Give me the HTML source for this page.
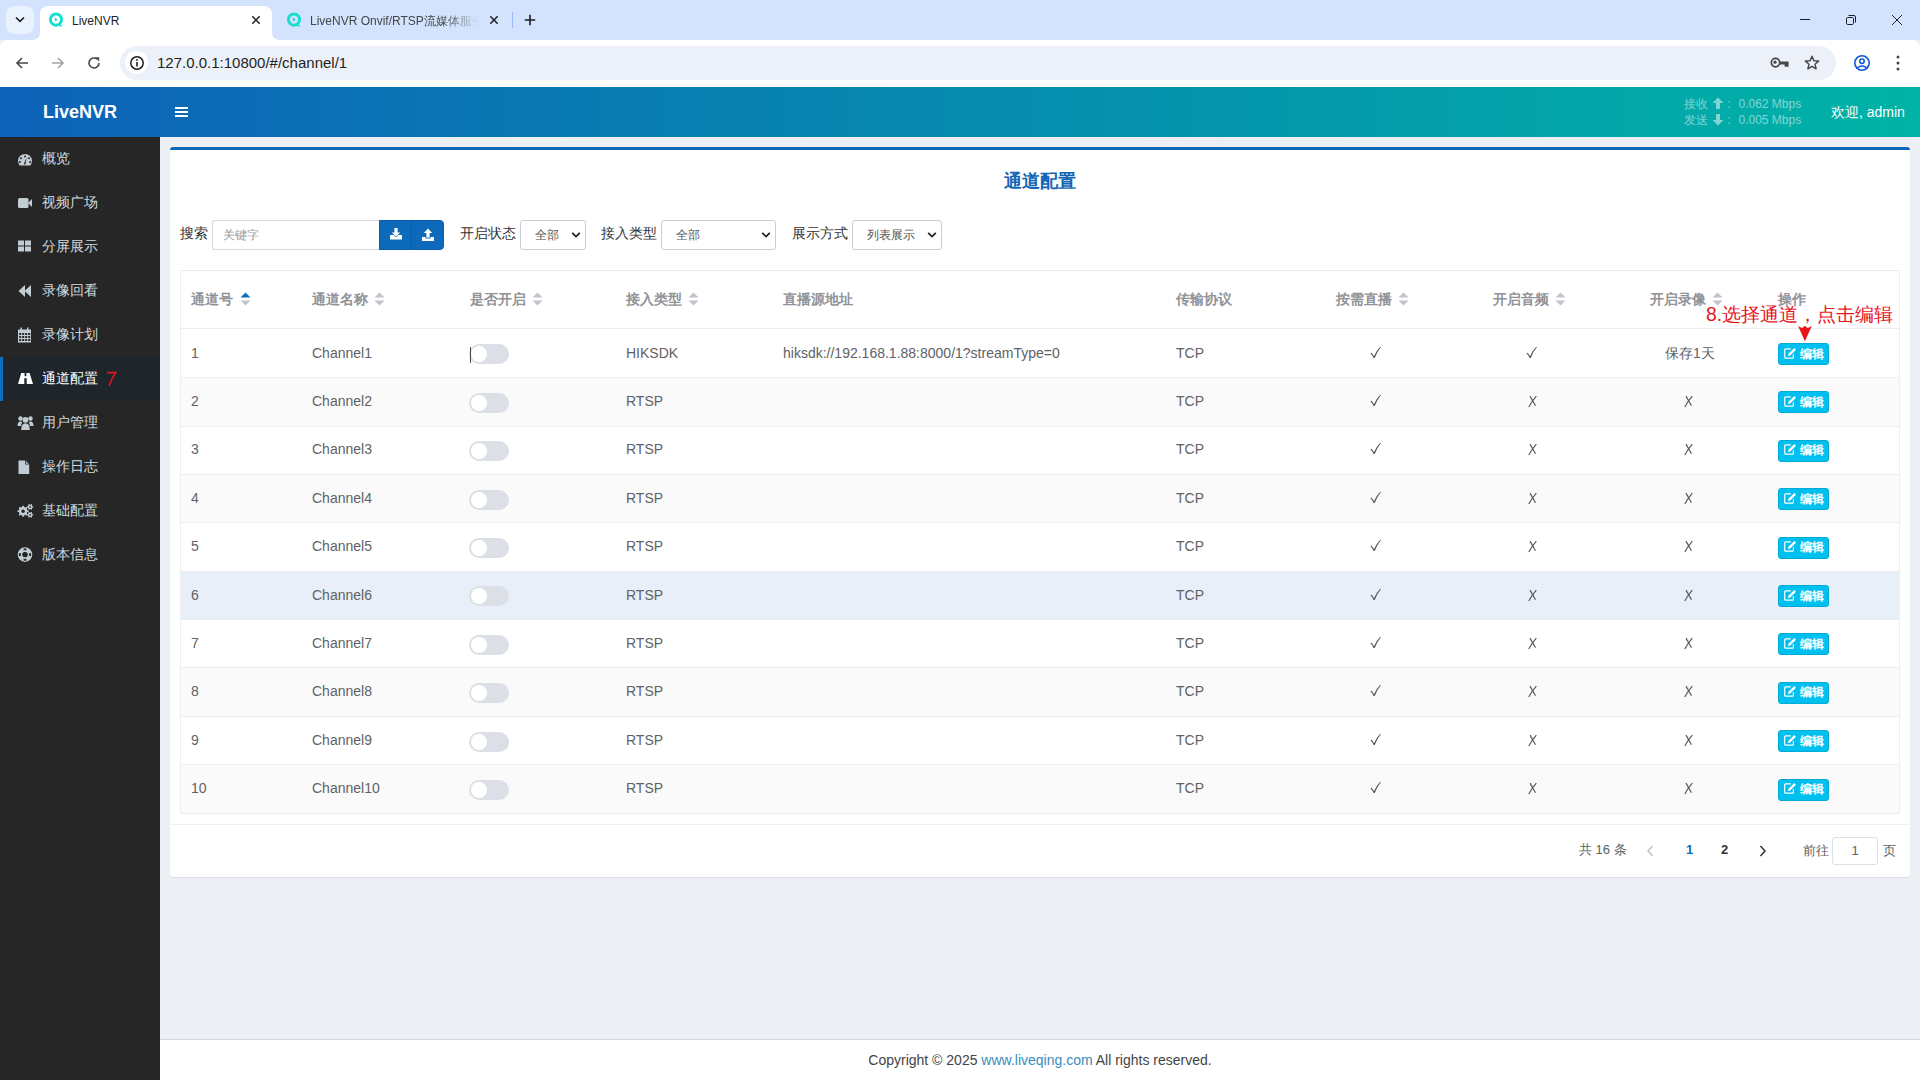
<!DOCTYPE html>
<html><head><meta charset="utf-8">
<style>
*{box-sizing:border-box;margin:0;padding:0}
html,body{width:1920px;height:1080px;overflow:hidden;background:#ecf0f5;font-family:"Liberation Sans",sans-serif;font-size:14px;color:#606266}
.abs{position:absolute}
/* browser chrome */
#tabstrip{position:absolute;left:0;top:0;width:1920px;height:40px;background:#d3e3fd}
#toolbar{position:absolute;left:0;top:40px;width:1920px;height:47px;background:#fff;border-radius:8px 8px 0 0}
#omni{position:absolute;left:120px;top:46px;width:1716px;height:34px;background:#ecf1f9;border-radius:17px}
/* app header */
#hdr{position:absolute;left:0;top:87px;width:1920px;height:50px;background:linear-gradient(90deg,#0d62b8 0%,#00b3a6 100%)}
#logo{position:absolute;left:0;top:87px;width:160px;height:50px;background:#0c65b9;color:#fff;font-weight:bold;font-size:18px;line-height:50px;text-align:center}
/* sidebar */
#side{position:absolute;left:0;top:137px;width:160px;height:943px;background:#262626}
.si{position:absolute;left:0;width:160px;height:44px;color:#cfd4d8;font-size:14px;line-height:44px}
.si .t{position:absolute;left:42px;top:0}
.si svg{position:absolute;left:18px;top:15px}
.si.act{background:#1e262b;color:#fff;border-left:3px solid #0d6ebd}
/* content */
#card{position:absolute;left:170px;top:147px;width:1740px;height:730px;background:#fff;border-top:3px solid #0d67b6;border-radius:3px;box-shadow:0 1px 1px rgba(0,0,0,.08)}
#footer{position:absolute;left:160px;top:1039px;width:1760px;height:41px;background:#fff;border-top:1px solid #d2d6de;text-align:center;color:#444;font-size:14px;line-height:40px}
#footer a{color:#3c8dbc;text-decoration:none}

.lbl{position:absolute;top:218px;line-height:30px;font-size:14px;color:#333}
.sel{position:absolute;top:220px;height:30px;border:1px solid #c8ccd3;border-radius:3px;background:#fff;font-size:12px;color:#555;line-height:28px}
.sel span{position:absolute;left:14px;top:0}
.sel svg{position:absolute;right:4px;top:10px}
.th{position:absolute;top:270px;height:58px;line-height:58px;font-size:14px;font-weight:bold;color:#909399;white-space:nowrap}
.caret{position:absolute;top:292px}
.row{position:absolute;left:181px;width:1718px;border-bottom:1px solid #ebeef5}
.td{position:absolute;font-size:14px;color:#606266;white-space:nowrap}
.sw{position:absolute;left:469px;width:40px;height:20px;border-radius:10px;background:#dcdfe6}
.sw:after{content:"";position:absolute;left:2px;top:2px;width:16px;height:16px;border-radius:50%;background:#fff}
.btn{position:absolute;left:1778px;width:51px;height:22px;background:#00c0ef;border:1px solid #00acd6;border-radius:3px}
.btn svg{position:absolute;left:5px;top:3.5px}
.btn span{position:absolute;left:21px;top:-0.5px;line-height:20px;font-size:12px;font-weight:bold;color:#fff}
</style></head><body>

<div id="tabstrip"></div>
<div class="abs" style="left:6px;top:6px;width:28px;height:28px;background:#e9f1fd;border-radius:8px"></div>
<svg class="abs" style="left:14px;top:13px" width="12" height="12" viewBox="0 0 12 12"><path d="M2 4.5 L6 8.4 L10 4.5" fill="none" stroke="#1f1f1f" stroke-width="1.6"/></svg>
<!-- active tab -->
<div class="abs" style="left:40px;top:6px;width:232px;height:34px;background:#fff;border-radius:8px 8px 0 0"></div>
<svg class="abs" style="left:32px;top:32px" width="8" height="8" viewBox="0 0 8 8"><path d="M0 8 Q8 8 8 0 L8 8 Z" fill="#fff"/></svg>
<svg class="abs" style="left:272px;top:32px" width="8" height="8" viewBox="0 0 8 8"><path d="M8 8 Q0 8 0 0 L0 8 Z" fill="#fff"/></svg>
<svg class="abs" style="left:48px;top:12px" width="16" height="16" viewBox="0 0 16 16"><circle cx="8" cy="7.6" r="5.6" fill="none" stroke="#16dfd2" stroke-width="2.9"/><path d="M11.5 11.5 L15 15 L10.5 13.8 Z" fill="#16e0c8"/><path d="M6.8 5.6 L9.8 7.6 L6.8 9.6 Z" fill="#18d8ec"/></svg>
<div class="abs" style="left:72px;top:14px;font-size:12px;line-height:14px;color:#1f1f1f">LiveNVR</div>
<svg class="abs" style="left:250px;top:14px" width="12" height="12" viewBox="0 0 12 12"><path d="M2.3 2.3 L9.7 9.7 M9.7 2.3 L2.3 9.7" stroke="#1f1f1f" stroke-width="1.5"/></svg>
<!-- tab 2 -->
<svg class="abs" style="left:286px;top:12px" width="16" height="16" viewBox="0 0 16 16"><circle cx="8" cy="7.6" r="5.6" fill="none" stroke="#16dfd2" stroke-width="2.9"/><path d="M11.5 11.5 L15 15 L10.5 13.8 Z" fill="#16e0c8"/><path d="M6.8 5.6 L9.8 7.6 L6.8 9.6 Z" fill="#18d8ec"/></svg>
<div class="abs" style="left:310px;top:14px;width:168px;height:16px;overflow:hidden;white-space:nowrap;font-size:12px;line-height:14px;color:#444746;-webkit-mask-image:linear-gradient(90deg,#000 80%,transparent 100%)">LiveNVR Onvif/RTSP流媒体服务</div>
<svg class="abs" style="left:488px;top:14px" width="12" height="12" viewBox="0 0 12 12"><path d="M2.3 2.3 L9.7 9.7 M9.7 2.3 L2.3 9.7" stroke="#1f1f1f" stroke-width="1.5"/></svg>
<div class="abs" style="left:512px;top:12px;width:1px;height:16px;background:#9bbcf1"></div>
<svg class="abs" style="left:522px;top:12px" width="16" height="16" viewBox="0 0 16 16"><path d="M8 2.8 V13.2 M2.8 8 H13.2" stroke="#1f1f1f" stroke-width="1.6"/></svg>
<!-- window controls -->
<div class="abs" style="left:1800px;top:19px;width:10px;height:1px;background:#1f1f1f"></div>
<svg class="abs" style="left:1844px;top:13px" width="14" height="14" viewBox="0 0 14 14"><rect x="2.5" y="4.5" width="7" height="7" rx="1.2" fill="none" stroke="#1f1f1f" stroke-width="1"/><path d="M4.5 2.5 H10 Q11.5 2.5 11.5 4 V9.5" fill="none" stroke="#1f1f1f" stroke-width="1"/></svg>
<svg class="abs" style="left:1890px;top:13px" width="14" height="14" viewBox="0 0 14 14"><path d="M2 2 L12 12 M12 2 L2 12" stroke="#1f1f1f" stroke-width="1"/></svg>
<!-- toolbar -->
<div id="toolbar"></div>
<svg class="abs" style="left:14px;top:55px" width="16" height="16" viewBox="0 0 16 16"><path d="M14 8 H3 M8 3 L3 8 L8 13" fill="none" stroke="#474747" stroke-width="1.6"/></svg>
<svg class="abs" style="left:50px;top:55px" width="16" height="16" viewBox="0 0 16 16"><path d="M2 8 H13 M8 3 L13 8 L8 13" fill="none" stroke="#a4a4a4" stroke-width="1.6"/></svg>
<svg class="abs" style="left:86px;top:55px" width="16" height="16" viewBox="0 0 16 16"><path d="M13 8 A5 5 0 1 1 11.3 4.2" fill="none" stroke="#474747" stroke-width="1.6"/><path d="M9 2.2 H13.2 V6.4 Z" fill="#474747"/></svg>
<div id="omni"></div>
<div class="abs" style="left:125px;top:51px;width:23px;height:23px;border-radius:50%;background:#fff"></div>
<svg class="abs" style="left:129px;top:55px" width="16" height="16" viewBox="0 0 16 16"><circle cx="8" cy="8" r="6.2" fill="none" stroke="#1f1f1f" stroke-width="1.5"/><path d="M8 7 V11.6" stroke="#1f1f1f" stroke-width="1.6"/><circle cx="8" cy="4.9" r="0.95" fill="#1f1f1f"/></svg>
<div class="abs" style="left:157px;top:54px;font-size:15px;line-height:17px;color:#1f1f1f">127.0.0.1:10800/#/channel/1</div>
<svg class="abs" style="left:1770px;top:55px" width="20" height="16" viewBox="0 0 20 16"><circle cx="5.5" cy="7.6" r="4.2" fill="none" stroke="#474747" stroke-width="1.7"/><circle cx="5" cy="7.2" r="1.6" fill="#474747"/><path d="M9.4 6.4 H18.6 V11.8 H14.6 V9.6 H9.4 Z" fill="#474747"/></svg>
<svg class="abs" style="left:1803px;top:54px" width="18" height="18" viewBox="0 0 18 18"><path d="M9 2.3 L10.9 6.7 L15.6 7.1 L12 10.2 L13.1 14.8 L9 12.4 L4.9 14.8 L6 10.2 L2.4 7.1 L7.1 6.7 Z" fill="none" stroke="#474747" stroke-width="1.5" stroke-linejoin="round"/></svg>
<svg class="abs" style="left:1852px;top:53px" width="20" height="20" viewBox="0 0 20 20"><circle cx="10" cy="10" r="7.2" fill="none" stroke="#0b57d0" stroke-width="1.6"/><circle cx="10" cy="8.2" r="2.2" fill="none" stroke="#0b57d0" stroke-width="1.5"/><path d="M5.2 15 Q10 11 14.8 15" fill="none" stroke="#0b57d0" stroke-width="1.5"/></svg>
<svg class="abs" style="left:1894px;top:54px" width="8" height="18" viewBox="0 0 8 18"><circle cx="4" cy="3" r="1.5" fill="#474747"/><circle cx="4" cy="9" r="1.5" fill="#474747"/><circle cx="4" cy="15" r="1.5" fill="#474747"/></svg>

<div id="hdr"></div>
<div class="abs" style="left:43px;top:87px;font-weight:bold;font-size:18px;line-height:50px;color:#fff">LiveNVR</div>
<div class="abs" style="left:175px;top:107px;width:13px;height:2px;background:#fff"></div>
<div class="abs" style="left:175px;top:111px;width:13px;height:2px;background:#fff"></div>
<div class="abs" style="left:175px;top:115px;width:13px;height:2px;background:#fff"></div>
<div class="abs" style="left:1684px;top:96px;font-size:12px;line-height:16px;color:rgba(255,255,255,.5);white-space:nowrap">接收<br>发送</div>
<div class="abs" style="left:1727px;top:96px;font-size:12px;line-height:16px;color:rgba(255,255,255,.5);white-space:nowrap">:<br>:</div>
<div class="abs" style="left:1738.5px;top:96px;font-size:12px;line-height:16px;color:rgba(255,255,255,.5);white-space:nowrap">0.062 Mbps<br>0.005 Mbps</div>
<svg class="abs" style="left:1712px;top:97px" width="12" height="13" viewBox="0 0 12 13"><path d="M6 0.5 L11.5 6 H8 V12 H4 V6 H0.5 Z" fill="rgba(255,255,255,.5)"/></svg>
<svg class="abs" style="left:1712px;top:113px" width="12" height="13" viewBox="0 0 12 13"><path d="M6 12.5 L11.5 7 H8 V1 H4 V7 H0.5 Z" fill="rgba(255,255,255,.5)"/></svg>
<div class="abs" style="left:1831px;top:87px;font-size:14px;line-height:50px;color:#fff">欢迎, admin</div>
<div id="side"></div>
<div class="si" style="top:137px"></div>
<svg class="abs" style="left:17px;top:153px" width="16" height="14" viewBox="0 0 16 14"><path d="M2.6 12.4 A7 7 0 1 1 13.4 12.4 Z" fill="#c2cdd3"/><circle cx="8" cy="3.6" r="1" fill="#262626"/><circle cx="4" cy="5.2" r="1" fill="#262626"/><circle cx="12" cy="5.2" r="1" fill="#262626"/><circle cx="2.8" cy="9" r="1" fill="#262626"/><circle cx="13.2" cy="9" r="1" fill="#262626"/><path d="M9.6 4.6 L7 10.6 Q7.2 12 8.4 11.4 Z" fill="#262626"/></svg>
<div class="abs st" style="left:42px;top:136px;line-height:44px;font-size:14px;color:#d0d9de">概览</div>
<div class="si" style="top:181px"></div>
<svg class="abs" style="left:17px;top:196px" width="16" height="14" viewBox="0 0 16 14"><rect x="1" y="2" width="10.5" height="10" rx="1.6" fill="#c2cdd3"/><path d="M11 7 L15 3 V11 Z" fill="#c2cdd3"/></svg>
<div class="abs st" style="left:42px;top:180px;line-height:44px;font-size:14px;color:#d0d9de">视频广场</div>
<div class="si" style="top:225px"></div>
<svg class="abs" style="left:17px;top:239px" width="16" height="14" viewBox="0 0 16 14"><rect x="1" y="1.5" width="6" height="5" fill="#c2cdd3"/><rect x="8" y="1.5" width="6" height="5" fill="#c2cdd3"/><rect x="1" y="7.5" width="6" height="5" fill="#c2cdd3"/><rect x="8" y="7.5" width="6" height="5" fill="#c2cdd3"/></svg>
<div class="abs st" style="left:42px;top:224px;line-height:44px;font-size:14px;color:#d0d9de">分屏展示</div>
<div class="si" style="top:269px"></div>
<svg class="abs" style="left:17px;top:284px" width="16" height="14" viewBox="0 0 16 14"><path d="M1.5 7 L8 1 V13 Z" fill="#c2cdd3"/><path d="M7.5 7 L14 1 V13 Z" fill="#c2cdd3"/></svg>
<div class="abs st" style="left:42px;top:268px;line-height:44px;font-size:14px;color:#d0d9de">录像回看</div>
<div class="si" style="top:313px"></div>
<svg class="abs" style="left:17px;top:327px" width="16" height="16" viewBox="0 0 16 16"><rect x="1" y="2.5" width="13" height="13" fill="#c2cdd3"/><g fill="#262626"><rect x="2.2" y="6" width="2" height="2"/><rect x="5.2" y="6" width="2" height="2"/><rect x="8.2" y="6" width="2" height="2"/><rect x="11.2" y="6" width="2" height="2"/><rect x="2.2" y="9" width="2" height="2"/><rect x="5.2" y="9" width="2" height="2"/><rect x="8.2" y="9" width="2" height="2"/><rect x="11.2" y="9" width="2" height="2"/><rect x="2.2" y="12" width="2" height="2"/><rect x="5.2" y="12" width="2" height="2"/><rect x="8.2" y="12" width="2" height="2"/><rect x="11.2" y="12" width="2" height="2"/></g><rect x="3.5" y="0.5" width="1.5" height="3" fill="#c2cdd3"/><rect x="10" y="0.5" width="1.5" height="3" fill="#c2cdd3"/></svg>
<div class="abs st" style="left:42px;top:312px;line-height:44px;font-size:14px;color:#d0d9de">录像计划</div>
<div class="si act" style="top:357px"></div>
<svg class="abs" style="left:17px;top:372px" width="17" height="14" viewBox="0 0 17 14"><path d="M4.2 1 H12.6 L16 12 H1 Z" fill="#fff"/><rect x="7.6" y="1" width="1.8" height="3.2" fill="#1e262b"/><rect x="7.3" y="6.2" width="2.4" height="5.8" fill="#1e262b"/></svg>
<div class="abs st" style="left:42px;top:356px;line-height:44px;font-size:14px;color:#fff">通道配置</div>
<div class="si" style="top:401px"></div>
<svg class="abs" style="left:17px;top:415px" width="18" height="16" viewBox="0 0 18 16"><circle cx="3.5" cy="3.5" r="2.2" fill="#c2cdd3"/><circle cx="13.5" cy="3.5" r="2.2" fill="#c2cdd3"/><circle cx="8.5" cy="4.8" r="2.9" fill="#c2cdd3"/><path d="M0.5 11 Q0.5 6.5 3.5 6.5 Q5 6.5 5.3 7.3 Q4 9 4.2 11 Z" fill="#c2cdd3"/><path d="M16.5 11 Q16.5 6.5 13.5 6.5 Q12 6.5 11.7 7.3 Q13 9 12.8 11 Z" fill="#c2cdd3"/><path d="M4.2 15 Q4.2 8.3 8.5 8.3 Q12.8 8.3 12.8 15 Z" fill="#c2cdd3"/></svg>
<div class="abs st" style="left:42px;top:400px;line-height:44px;font-size:14px;color:#d0d9de">用户管理</div>
<div class="si" style="top:445px"></div>
<svg class="abs" style="left:17px;top:460px" width="16" height="16" viewBox="0 0 16 16"><path d="M1.5 0.5 H8.2 L12.2 4.5 V14 H1.5 Z" fill="#c2cdd3"/><path d="M8.2 0.5 V4.5 H12.2" fill="#262626"/><path d="M9 1.3 L11.4 3.7 H9 Z" fill="#c2cdd3"/></svg>
<div class="abs st" style="left:42px;top:444px;line-height:44px;font-size:14px;color:#d0d9de">操作日志</div>
<div class="si" style="top:489px"></div>
<svg class="abs" style="left:17px;top:503px" width="17" height="17" viewBox="0 0 17 17"><circle cx="6.1" cy="8.2" r="4.2" fill="#c2cdd3"/><path d="M10.20 7.30 L11.65 7.48 L11.65 8.92 L10.20 9.10 L9.64 10.46 L10.54 11.61 L9.51 12.64 L8.36 11.74 L7.00 12.30 L6.82 13.75 L5.38 13.75 L5.20 12.30 L3.84 11.74 L2.69 12.64 L1.66 11.61 L2.56 10.46 L2.00 9.10 L0.55 8.92 L0.55 7.48 L2.00 7.30 L2.56 5.94 L1.66 4.79 L2.69 3.76 L3.84 4.66 L5.20 4.10 L5.38 2.65 L6.82 2.65 L7.00 4.10 L8.36 4.66 L9.51 3.76 L10.54 4.79 L9.64 5.94 Z" fill="#c2cdd3"/><circle cx="6.1" cy="8.2" r="1.7" fill="#262626"/><circle cx="13.2" cy="3.9" r="2.2" fill="#c2cdd3"/><path d="M15.31 3.28 L16.25 3.37 L16.25 4.43 L15.31 4.52 L14.80 5.41 L15.19 6.28 L14.27 6.81 L13.71 6.04 L12.69 6.04 L12.13 6.81 L11.21 6.28 L11.60 5.41 L11.09 4.52 L10.15 4.43 L10.15 3.37 L11.09 3.28 L11.60 2.39 L11.21 1.52 L12.13 0.99 L12.69 1.76 L13.71 1.76 L14.27 0.99 L15.19 1.52 L14.80 2.39 Z" fill="#c2cdd3"/><circle cx="13.2" cy="3.9" r="0.9" fill="#262626"/><circle cx="13.2" cy="11.8" r="2.2" fill="#c2cdd3"/><path d="M15.31 11.18 L16.25 11.27 L16.25 12.33 L15.31 12.42 L14.80 13.31 L15.19 14.18 L14.27 14.71 L13.71 13.94 L12.69 13.94 L12.13 14.71 L11.21 14.18 L11.60 13.31 L11.09 12.42 L10.15 12.33 L10.15 11.27 L11.09 11.18 L11.60 10.29 L11.21 9.42 L12.13 8.89 L12.69 9.66 L13.71 9.66 L14.27 8.89 L15.19 9.42 L14.80 10.29 Z" fill="#c2cdd3"/><circle cx="13.2" cy="11.8" r="0.9" fill="#262626"/></svg>
<div class="abs st" style="left:42px;top:488px;line-height:44px;font-size:14px;color:#d0d9de">基础配置</div>
<div class="si" style="top:533px"></div>
<svg class="abs" style="left:17px;top:547px" width="16" height="16" viewBox="0 0 16 16"><circle cx="8" cy="7.6" r="7.3" fill="#c2cdd3"/><circle cx="8" cy="7.6" r="2.9" fill="#262626"/><g fill="#262626"><rect x="6.6" y="1.5" width="2.8" height="2.2"/><rect x="6.6" y="11.5" width="2.8" height="2.2"/><rect x="1.9" y="6.2" width="2.2" height="2.8"/><rect x="11.9" y="6.2" width="2.2" height="2.8"/></g><circle cx="8" cy="7.6" r="3.6" fill="none" stroke="#c2cdd3" stroke-width="1.3"/></svg>
<div class="abs st" style="left:42px;top:532px;line-height:44px;font-size:14px;color:#d0d9de">版本信息</div>
<svg class="abs" style="left:105px;top:370px" width="14" height="18" viewBox="0 0 14 18"><path d="M2 2.6 H10.6 Q7 8 4 16" fill="none" stroke="#e8141c" stroke-width="1.6"/></svg>
<div id="card"></div>
<div class="abs" style="left:1004px;top:169px;font-size:18px;line-height:24px;font-weight:bold;color:#1066b6">通道配置</div>
<div class="lbl" style="left:180px">搜索</div>
<div class="abs" style="left:212px;top:220px;width:168px;height:30px;border:1px solid #d2d6de;border-right:none;border-radius:3px 0 0 3px;background:#fff"></div>
<div class="abs" style="left:223px;top:220px;line-height:30px;font-size:12px;color:#999">关键字</div>
<div class="abs" style="left:379px;top:220px;width:65px;height:30px;background:#0d6abb;border:1px solid #0a5fa9;border-radius:0 4px 4px 0"></div>
<div class="abs" style="left:411px;top:220px;width:1px;height:30px;background:#0a5ea8"></div>
<svg class="abs" style="left:389px;top:227px" width="14" height="14" viewBox="0 0 14 14"><path d="M5.4 1 H8.6 V5.5 H11.2 L7 9.8 L2.8 5.5 H5.4 Z" fill="#fff"/><path d="M1 8 H4.6 L7 10.4 L9.4 8 H13 V12.4 H1 Z" fill="#fff"/></svg>
<svg class="abs" style="left:421px;top:228px" width="14" height="14" viewBox="0 0 14 14"><path d="M7 0.6 L11.2 4.9 H8.6 V9.4 H5.4 V4.9 H2.8 Z" fill="#fff"/><path d="M1 9 H4.6 V10.4 H9.4 V9 H13 V13 H1 Z" fill="#fff"/></svg>
<div class="lbl" style="left:460px">开启状态</div>
<div class="sel" style="left:520px;width:66px"><span>全部</span><svg width="10" height="8" viewBox="0 0 10 8"><path d="M1.2 1.8 L5 5.6 L8.8 1.8" fill="none" stroke="#222" stroke-width="1.8"/></svg></div>
<div class="lbl" style="left:601px">接入类型</div>
<div class="sel" style="left:661px;width:115px"><span>全部</span><svg width="10" height="8" viewBox="0 0 10 8"><path d="M1.2 1.8 L5 5.6 L8.8 1.8" fill="none" stroke="#222" stroke-width="1.8"/></svg></div>
<div class="lbl" style="left:792px">展示方式</div>
<div class="sel" style="left:852px;width:90px"><span>列表展示</span><svg width="10" height="8" viewBox="0 0 10 8"><path d="M1.2 1.8 L5 5.6 L8.8 1.8" fill="none" stroke="#222" stroke-width="1.8"/></svg></div>
<div class="abs" style="left:180px;top:270px;width:1720px;height:544px;border:1px solid #ebeef5;border-top-color:#ebebeb;background:#fff"></div>
<div class="abs" style="left:181px;top:328px;width:1718px;height:1px;background:#ebeef5"></div>
<div class="th" style="left:191px">通道号</div>
<svg class="caret" style="left:240px" width="11" height="14" viewBox="0 0 11 14"><path d="M0.5 5.5 L5.5 0.5 L10.5 5.5 Z" fill="#0d6ebd"/><path d="M0.5 8.5 L5.5 13.5 L10.5 8.5 Z" fill="#c0c4cc"/></svg>
<div class="th" style="left:312px">通道名称</div>
<svg class="caret" style="left:374px" width="11" height="14" viewBox="0 0 11 14"><path d="M0.5 5.5 L5.5 0.5 L10.5 5.5 Z" fill="#c0c4cc"/><path d="M0.5 8.5 L5.5 13.5 L10.5 8.5 Z" fill="#c0c4cc"/></svg>
<div class="th" style="left:470px">是否开启</div>
<svg class="caret" style="left:532px" width="11" height="14" viewBox="0 0 11 14"><path d="M0.5 5.5 L5.5 0.5 L10.5 5.5 Z" fill="#c0c4cc"/><path d="M0.5 8.5 L5.5 13.5 L10.5 8.5 Z" fill="#c0c4cc"/></svg>
<div class="th" style="left:626px">接入类型</div>
<svg class="caret" style="left:688px" width="11" height="14" viewBox="0 0 11 14"><path d="M0.5 5.5 L5.5 0.5 L10.5 5.5 Z" fill="#c0c4cc"/><path d="M0.5 8.5 L5.5 13.5 L10.5 8.5 Z" fill="#c0c4cc"/></svg>
<div class="th" style="left:783px">直播源地址</div>
<div class="th" style="left:1176px">传输协议</div>
<div class="th" style="left:1336px">按需直播</div>
<svg class="caret" style="left:1398px" width="11" height="14" viewBox="0 0 11 14"><path d="M0.5 5.5 L5.5 0.5 L10.5 5.5 Z" fill="#c0c4cc"/><path d="M0.5 8.5 L5.5 13.5 L10.5 8.5 Z" fill="#c0c4cc"/></svg>
<div class="th" style="left:1493px">开启音频</div>
<svg class="caret" style="left:1555px" width="11" height="14" viewBox="0 0 11 14"><path d="M0.5 5.5 L5.5 0.5 L10.5 5.5 Z" fill="#c0c4cc"/><path d="M0.5 8.5 L5.5 13.5 L10.5 8.5 Z" fill="#c0c4cc"/></svg>
<div class="th" style="left:1650px">开启录像</div>
<svg class="caret" style="left:1712px" width="11" height="14" viewBox="0 0 11 14"><path d="M0.5 5.5 L5.5 0.5 L10.5 5.5 Z" fill="#c0c4cc"/><path d="M0.5 8.5 L5.5 13.5 L10.5 8.5 Z" fill="#c0c4cc"/></svg>
<div class="th" style="left:1778px">操作</div>
<div class="row" style="top:330px;height:48px;background:#fff"></div>
<div class="td" style="left:191px;top:329.60px;line-height:47.40px">1</div>
<div class="td" style="left:312px;top:329.60px;line-height:47.40px">Channel1</div>
<div class="sw" style="top:344.30px"></div>
<div class="td" style="left:626px;top:329.60px;line-height:47.40px">HIKSDK</div>
<div class="td" style="left:783px;top:329.60px;line-height:47.40px">hiksdk://192.168.1.88:8000/1?streamType=0</div>
<div class="td" style="left:1176px;top:329.60px;line-height:47.40px">TCP</div>
<svg class="abs" style="left:1368px;top:344.60px" width="16" height="16" viewBox="0 0 16 16"><path d="M2.4 8.3 L3.6 7.7 Q5 9.4 6 11.3 Q8.6 5.2 12.3 1.7 L12.9 2.3 Q9.6 6 6.7 12.9 L5.6 12.9 Q4.3 9.8 2.4 8.3 Z" fill="#555"/></svg>
<svg class="abs" style="left:1524px;top:344.60px" width="16" height="16" viewBox="0 0 16 16"><path d="M2.4 8.3 L3.6 7.7 Q5 9.4 6 11.3 Q8.6 5.2 12.3 1.7 L12.9 2.3 Q9.6 6 6.7 12.9 L5.6 12.9 Q4.3 9.8 2.4 8.3 Z" fill="#555"/></svg>
<div class="td" style="left:1665px;top:329.60px;line-height:47.40px">保存1天</div>
<div class="btn" style="top:343.00px"><svg width="13" height="12" viewBox="0 0 13 12"><path d="M6.8 0.8 H1.7 Q0.7 0.8 0.7 1.8 V9.2 Q0.7 10.2 1.7 10.2 H8.4 Q9.4 10.2 9.4 9.2 V6.2" fill="none" stroke="#fff" stroke-width="1.2"/><path d="M10.3 0 L12 1.7 L6.2 7.5 L3.9 8.1 L4.5 5.8 Z" fill="#fff"/></svg><span>编辑</span></div>
<div class="row" style="top:378px;height:49px;background:#fafafa"></div>
<div class="td" style="left:191px;top:378.00px;line-height:47.40px">2</div>
<div class="td" style="left:312px;top:378.00px;line-height:47.40px">Channel2</div>
<div class="sw" style="top:392.70px"></div>
<div class="td" style="left:626px;top:378.00px;line-height:47.40px">RTSP</div>
<div class="td" style="left:1176px;top:378.00px;line-height:47.40px">TCP</div>
<svg class="abs" style="left:1368px;top:393.00px" width="16" height="16" viewBox="0 0 16 16"><path d="M2.4 8.3 L3.6 7.7 Q5 9.4 6 11.3 Q8.6 5.2 12.3 1.7 L12.9 2.3 Q9.6 6 6.7 12.9 L5.6 12.9 Q4.3 9.8 2.4 8.3 Z" fill="#555"/></svg>
<svg class="abs" style="left:1526px;top:393.00px" width="16" height="16" viewBox="0 0 16 16"><path d="M4 3.1 Q6.5 7.5 9.5 12.7 M10.3 3.1 Q6 8 2.8 14" fill="none" stroke="#555" stroke-width="1.15"/></svg>
<svg class="abs" style="left:1682px;top:393.00px" width="16" height="16" viewBox="0 0 16 16"><path d="M4 3.1 Q6.5 7.5 9.5 12.7 M10.3 3.1 Q6 8 2.8 14" fill="none" stroke="#555" stroke-width="1.15"/></svg>
<div class="btn" style="top:391.40px"><svg width="13" height="12" viewBox="0 0 13 12"><path d="M6.8 0.8 H1.7 Q0.7 0.8 0.7 1.8 V9.2 Q0.7 10.2 1.7 10.2 H8.4 Q9.4 10.2 9.4 9.2 V6.2" fill="none" stroke="#fff" stroke-width="1.2"/><path d="M10.3 0 L12 1.7 L6.2 7.5 L3.9 8.1 L4.5 5.8 Z" fill="#fff"/></svg><span>编辑</span></div>
<div class="row" style="top:427px;height:48px;background:#fff"></div>
<div class="td" style="left:191px;top:426.40px;line-height:47.40px">3</div>
<div class="td" style="left:312px;top:426.40px;line-height:47.40px">Channel3</div>
<div class="sw" style="top:441.10px"></div>
<div class="td" style="left:626px;top:426.40px;line-height:47.40px">RTSP</div>
<div class="td" style="left:1176px;top:426.40px;line-height:47.40px">TCP</div>
<svg class="abs" style="left:1368px;top:441.40px" width="16" height="16" viewBox="0 0 16 16"><path d="M2.4 8.3 L3.6 7.7 Q5 9.4 6 11.3 Q8.6 5.2 12.3 1.7 L12.9 2.3 Q9.6 6 6.7 12.9 L5.6 12.9 Q4.3 9.8 2.4 8.3 Z" fill="#555"/></svg>
<svg class="abs" style="left:1526px;top:441.40px" width="16" height="16" viewBox="0 0 16 16"><path d="M4 3.1 Q6.5 7.5 9.5 12.7 M10.3 3.1 Q6 8 2.8 14" fill="none" stroke="#555" stroke-width="1.15"/></svg>
<svg class="abs" style="left:1682px;top:441.40px" width="16" height="16" viewBox="0 0 16 16"><path d="M4 3.1 Q6.5 7.5 9.5 12.7 M10.3 3.1 Q6 8 2.8 14" fill="none" stroke="#555" stroke-width="1.15"/></svg>
<div class="btn" style="top:439.80px"><svg width="13" height="12" viewBox="0 0 13 12"><path d="M6.8 0.8 H1.7 Q0.7 0.8 0.7 1.8 V9.2 Q0.7 10.2 1.7 10.2 H8.4 Q9.4 10.2 9.4 9.2 V6.2" fill="none" stroke="#fff" stroke-width="1.2"/><path d="M10.3 0 L12 1.7 L6.2 7.5 L3.9 8.1 L4.5 5.8 Z" fill="#fff"/></svg><span>编辑</span></div>
<div class="row" style="top:475px;height:48px;background:#fafafa"></div>
<div class="td" style="left:191px;top:474.80px;line-height:47.40px">4</div>
<div class="td" style="left:312px;top:474.80px;line-height:47.40px">Channel4</div>
<div class="sw" style="top:489.50px"></div>
<div class="td" style="left:626px;top:474.80px;line-height:47.40px">RTSP</div>
<div class="td" style="left:1176px;top:474.80px;line-height:47.40px">TCP</div>
<svg class="abs" style="left:1368px;top:489.80px" width="16" height="16" viewBox="0 0 16 16"><path d="M2.4 8.3 L3.6 7.7 Q5 9.4 6 11.3 Q8.6 5.2 12.3 1.7 L12.9 2.3 Q9.6 6 6.7 12.9 L5.6 12.9 Q4.3 9.8 2.4 8.3 Z" fill="#555"/></svg>
<svg class="abs" style="left:1526px;top:489.80px" width="16" height="16" viewBox="0 0 16 16"><path d="M4 3.1 Q6.5 7.5 9.5 12.7 M10.3 3.1 Q6 8 2.8 14" fill="none" stroke="#555" stroke-width="1.15"/></svg>
<svg class="abs" style="left:1682px;top:489.80px" width="16" height="16" viewBox="0 0 16 16"><path d="M4 3.1 Q6.5 7.5 9.5 12.7 M10.3 3.1 Q6 8 2.8 14" fill="none" stroke="#555" stroke-width="1.15"/></svg>
<div class="btn" style="top:488.20px"><svg width="13" height="12" viewBox="0 0 13 12"><path d="M6.8 0.8 H1.7 Q0.7 0.8 0.7 1.8 V9.2 Q0.7 10.2 1.7 10.2 H8.4 Q9.4 10.2 9.4 9.2 V6.2" fill="none" stroke="#fff" stroke-width="1.2"/><path d="M10.3 0 L12 1.7 L6.2 7.5 L3.9 8.1 L4.5 5.8 Z" fill="#fff"/></svg><span>编辑</span></div>
<div class="row" style="top:523px;height:49px;background:#fff"></div>
<div class="td" style="left:191px;top:523.20px;line-height:47.40px">5</div>
<div class="td" style="left:312px;top:523.20px;line-height:47.40px">Channel5</div>
<div class="sw" style="top:537.90px"></div>
<div class="td" style="left:626px;top:523.20px;line-height:47.40px">RTSP</div>
<div class="td" style="left:1176px;top:523.20px;line-height:47.40px">TCP</div>
<svg class="abs" style="left:1368px;top:538.20px" width="16" height="16" viewBox="0 0 16 16"><path d="M2.4 8.3 L3.6 7.7 Q5 9.4 6 11.3 Q8.6 5.2 12.3 1.7 L12.9 2.3 Q9.6 6 6.7 12.9 L5.6 12.9 Q4.3 9.8 2.4 8.3 Z" fill="#555"/></svg>
<svg class="abs" style="left:1526px;top:538.20px" width="16" height="16" viewBox="0 0 16 16"><path d="M4 3.1 Q6.5 7.5 9.5 12.7 M10.3 3.1 Q6 8 2.8 14" fill="none" stroke="#555" stroke-width="1.15"/></svg>
<svg class="abs" style="left:1682px;top:538.20px" width="16" height="16" viewBox="0 0 16 16"><path d="M4 3.1 Q6.5 7.5 9.5 12.7 M10.3 3.1 Q6 8 2.8 14" fill="none" stroke="#555" stroke-width="1.15"/></svg>
<div class="btn" style="top:536.60px"><svg width="13" height="12" viewBox="0 0 13 12"><path d="M6.8 0.8 H1.7 Q0.7 0.8 0.7 1.8 V9.2 Q0.7 10.2 1.7 10.2 H8.4 Q9.4 10.2 9.4 9.2 V6.2" fill="none" stroke="#fff" stroke-width="1.2"/><path d="M10.3 0 L12 1.7 L6.2 7.5 L3.9 8.1 L4.5 5.8 Z" fill="#fff"/></svg><span>编辑</span></div>
<div class="row" style="top:572px;height:48px;background:#e8eff8"></div>
<div class="td" style="left:191px;top:571.60px;line-height:47.40px">6</div>
<div class="td" style="left:312px;top:571.60px;line-height:47.40px">Channel6</div>
<div class="sw" style="top:586.30px"></div>
<div class="td" style="left:626px;top:571.60px;line-height:47.40px">RTSP</div>
<div class="td" style="left:1176px;top:571.60px;line-height:47.40px">TCP</div>
<svg class="abs" style="left:1368px;top:586.60px" width="16" height="16" viewBox="0 0 16 16"><path d="M2.4 8.3 L3.6 7.7 Q5 9.4 6 11.3 Q8.6 5.2 12.3 1.7 L12.9 2.3 Q9.6 6 6.7 12.9 L5.6 12.9 Q4.3 9.8 2.4 8.3 Z" fill="#555"/></svg>
<svg class="abs" style="left:1526px;top:586.60px" width="16" height="16" viewBox="0 0 16 16"><path d="M4 3.1 Q6.5 7.5 9.5 12.7 M10.3 3.1 Q6 8 2.8 14" fill="none" stroke="#555" stroke-width="1.15"/></svg>
<svg class="abs" style="left:1682px;top:586.60px" width="16" height="16" viewBox="0 0 16 16"><path d="M4 3.1 Q6.5 7.5 9.5 12.7 M10.3 3.1 Q6 8 2.8 14" fill="none" stroke="#555" stroke-width="1.15"/></svg>
<div class="btn" style="top:585.00px"><svg width="13" height="12" viewBox="0 0 13 12"><path d="M6.8 0.8 H1.7 Q0.7 0.8 0.7 1.8 V9.2 Q0.7 10.2 1.7 10.2 H8.4 Q9.4 10.2 9.4 9.2 V6.2" fill="none" stroke="#fff" stroke-width="1.2"/><path d="M10.3 0 L12 1.7 L6.2 7.5 L3.9 8.1 L4.5 5.8 Z" fill="#fff"/></svg><span>编辑</span></div>
<div class="row" style="top:620px;height:48px;background:#fff"></div>
<div class="td" style="left:191px;top:620.00px;line-height:47.40px">7</div>
<div class="td" style="left:312px;top:620.00px;line-height:47.40px">Channel7</div>
<div class="sw" style="top:634.70px"></div>
<div class="td" style="left:626px;top:620.00px;line-height:47.40px">RTSP</div>
<div class="td" style="left:1176px;top:620.00px;line-height:47.40px">TCP</div>
<svg class="abs" style="left:1368px;top:635.00px" width="16" height="16" viewBox="0 0 16 16"><path d="M2.4 8.3 L3.6 7.7 Q5 9.4 6 11.3 Q8.6 5.2 12.3 1.7 L12.9 2.3 Q9.6 6 6.7 12.9 L5.6 12.9 Q4.3 9.8 2.4 8.3 Z" fill="#555"/></svg>
<svg class="abs" style="left:1526px;top:635.00px" width="16" height="16" viewBox="0 0 16 16"><path d="M4 3.1 Q6.5 7.5 9.5 12.7 M10.3 3.1 Q6 8 2.8 14" fill="none" stroke="#555" stroke-width="1.15"/></svg>
<svg class="abs" style="left:1682px;top:635.00px" width="16" height="16" viewBox="0 0 16 16"><path d="M4 3.1 Q6.5 7.5 9.5 12.7 M10.3 3.1 Q6 8 2.8 14" fill="none" stroke="#555" stroke-width="1.15"/></svg>
<div class="btn" style="top:633.40px"><svg width="13" height="12" viewBox="0 0 13 12"><path d="M6.8 0.8 H1.7 Q0.7 0.8 0.7 1.8 V9.2 Q0.7 10.2 1.7 10.2 H8.4 Q9.4 10.2 9.4 9.2 V6.2" fill="none" stroke="#fff" stroke-width="1.2"/><path d="M10.3 0 L12 1.7 L6.2 7.5 L3.9 8.1 L4.5 5.8 Z" fill="#fff"/></svg><span>编辑</span></div>
<div class="row" style="top:668px;height:49px;background:#fafafa"></div>
<div class="td" style="left:191px;top:668.40px;line-height:47.40px">8</div>
<div class="td" style="left:312px;top:668.40px;line-height:47.40px">Channel8</div>
<div class="sw" style="top:683.10px"></div>
<div class="td" style="left:626px;top:668.40px;line-height:47.40px">RTSP</div>
<div class="td" style="left:1176px;top:668.40px;line-height:47.40px">TCP</div>
<svg class="abs" style="left:1368px;top:683.40px" width="16" height="16" viewBox="0 0 16 16"><path d="M2.4 8.3 L3.6 7.7 Q5 9.4 6 11.3 Q8.6 5.2 12.3 1.7 L12.9 2.3 Q9.6 6 6.7 12.9 L5.6 12.9 Q4.3 9.8 2.4 8.3 Z" fill="#555"/></svg>
<svg class="abs" style="left:1526px;top:683.40px" width="16" height="16" viewBox="0 0 16 16"><path d="M4 3.1 Q6.5 7.5 9.5 12.7 M10.3 3.1 Q6 8 2.8 14" fill="none" stroke="#555" stroke-width="1.15"/></svg>
<svg class="abs" style="left:1682px;top:683.40px" width="16" height="16" viewBox="0 0 16 16"><path d="M4 3.1 Q6.5 7.5 9.5 12.7 M10.3 3.1 Q6 8 2.8 14" fill="none" stroke="#555" stroke-width="1.15"/></svg>
<div class="btn" style="top:681.80px"><svg width="13" height="12" viewBox="0 0 13 12"><path d="M6.8 0.8 H1.7 Q0.7 0.8 0.7 1.8 V9.2 Q0.7 10.2 1.7 10.2 H8.4 Q9.4 10.2 9.4 9.2 V6.2" fill="none" stroke="#fff" stroke-width="1.2"/><path d="M10.3 0 L12 1.7 L6.2 7.5 L3.9 8.1 L4.5 5.8 Z" fill="#fff"/></svg><span>编辑</span></div>
<div class="row" style="top:717px;height:48px;background:#fff"></div>
<div class="td" style="left:191px;top:716.80px;line-height:47.40px">9</div>
<div class="td" style="left:312px;top:716.80px;line-height:47.40px">Channel9</div>
<div class="sw" style="top:731.50px"></div>
<div class="td" style="left:626px;top:716.80px;line-height:47.40px">RTSP</div>
<div class="td" style="left:1176px;top:716.80px;line-height:47.40px">TCP</div>
<svg class="abs" style="left:1368px;top:731.80px" width="16" height="16" viewBox="0 0 16 16"><path d="M2.4 8.3 L3.6 7.7 Q5 9.4 6 11.3 Q8.6 5.2 12.3 1.7 L12.9 2.3 Q9.6 6 6.7 12.9 L5.6 12.9 Q4.3 9.8 2.4 8.3 Z" fill="#555"/></svg>
<svg class="abs" style="left:1526px;top:731.80px" width="16" height="16" viewBox="0 0 16 16"><path d="M4 3.1 Q6.5 7.5 9.5 12.7 M10.3 3.1 Q6 8 2.8 14" fill="none" stroke="#555" stroke-width="1.15"/></svg>
<svg class="abs" style="left:1682px;top:731.80px" width="16" height="16" viewBox="0 0 16 16"><path d="M4 3.1 Q6.5 7.5 9.5 12.7 M10.3 3.1 Q6 8 2.8 14" fill="none" stroke="#555" stroke-width="1.15"/></svg>
<div class="btn" style="top:730.20px"><svg width="13" height="12" viewBox="0 0 13 12"><path d="M6.8 0.8 H1.7 Q0.7 0.8 0.7 1.8 V9.2 Q0.7 10.2 1.7 10.2 H8.4 Q9.4 10.2 9.4 9.2 V6.2" fill="none" stroke="#fff" stroke-width="1.2"/><path d="M10.3 0 L12 1.7 L6.2 7.5 L3.9 8.1 L4.5 5.8 Z" fill="#fff"/></svg><span>编辑</span></div>
<div class="row" style="top:765px;height:49px;background:#fafafa"></div>
<div class="td" style="left:191px;top:765.20px;line-height:47.40px">10</div>
<div class="td" style="left:312px;top:765.20px;line-height:47.40px">Channel10</div>
<div class="sw" style="top:779.90px"></div>
<div class="td" style="left:626px;top:765.20px;line-height:47.40px">RTSP</div>
<div class="td" style="left:1176px;top:765.20px;line-height:47.40px">TCP</div>
<svg class="abs" style="left:1368px;top:780.20px" width="16" height="16" viewBox="0 0 16 16"><path d="M2.4 8.3 L3.6 7.7 Q5 9.4 6 11.3 Q8.6 5.2 12.3 1.7 L12.9 2.3 Q9.6 6 6.7 12.9 L5.6 12.9 Q4.3 9.8 2.4 8.3 Z" fill="#555"/></svg>
<svg class="abs" style="left:1526px;top:780.20px" width="16" height="16" viewBox="0 0 16 16"><path d="M4 3.1 Q6.5 7.5 9.5 12.7 M10.3 3.1 Q6 8 2.8 14" fill="none" stroke="#555" stroke-width="1.15"/></svg>
<svg class="abs" style="left:1682px;top:780.20px" width="16" height="16" viewBox="0 0 16 16"><path d="M4 3.1 Q6.5 7.5 9.5 12.7 M10.3 3.1 Q6 8 2.8 14" fill="none" stroke="#555" stroke-width="1.15"/></svg>
<div class="btn" style="top:778.60px"><svg width="13" height="12" viewBox="0 0 13 12"><path d="M6.8 0.8 H1.7 Q0.7 0.8 0.7 1.8 V9.2 Q0.7 10.2 1.7 10.2 H8.4 Q9.4 10.2 9.4 9.2 V6.2" fill="none" stroke="#fff" stroke-width="1.2"/><path d="M10.3 0 L12 1.7 L6.2 7.5 L3.9 8.1 L4.5 5.8 Z" fill="#fff"/></svg><span>编辑</span></div>
<div class="abs" style="left:470px;top:347px;width:1px;height:16px;background:#4a4a4a"></div>
<div class="abs" style="left:1706px;top:303px;font-size:19.4px;line-height:22px;color:#e8141c;white-space:nowrap">8.选择通道，点击编辑</div>
<svg class="abs" style="left:1797px;top:325px" width="16" height="17" viewBox="0 0 16 17"><path d="M1.1 1 Q3.5 2.4 5.5 3 Q6.8 1 7.8 0.9 Q8.9 1 10.3 3 Q12.4 2.4 14.8 1 L7.9 16.3 Z" fill="#e8141c"/></svg>
<div class="abs" style="left:170px;top:824px;width:1740px;height:1px;background:#f0f0f0"></div>
<div class="abs" style="left:1579px;top:836px;line-height:28px;font-size:13px;color:#606266;white-space:nowrap">共 16 条</div>
<svg class="abs" style="left:1645px;top:844px" width="10" height="14" viewBox="0 0 10 14"><path d="M7.5 2 L3 7 L7.5 12" fill="none" stroke="#c0c4cc" stroke-width="1.5"/></svg>
<div class="abs" style="left:1686px;top:836px;line-height:28px;font-size:13px;font-weight:bold;color:#0d6ebd">1</div>
<div class="abs" style="left:1721px;top:836px;line-height:28px;font-size:13px;font-weight:bold;color:#303133">2</div>
<svg class="abs" style="left:1758px;top:844px" width="10" height="14" viewBox="0 0 10 14"><path d="M2.5 2 L7 7 L2.5 12" fill="none" stroke="#303133" stroke-width="1.5"/></svg>
<div class="abs" style="left:1803px;top:837px;line-height:28px;font-size:13px;color:#606266">前往</div>
<div class="abs" style="left:1832px;top:837px;width:46px;height:28px;border:1px solid #dcdfe6;border-radius:3px;background:#fff;text-align:center;line-height:26px;font-size:13px;color:#606266">1</div>
<div class="abs" style="left:1883px;top:837px;line-height:28px;font-size:13px;color:#606266">页</div>
<div id="footer">Copyright © 2025 <a>www.liveqing.com</a> All rights reserved.</div>
</body></html>
